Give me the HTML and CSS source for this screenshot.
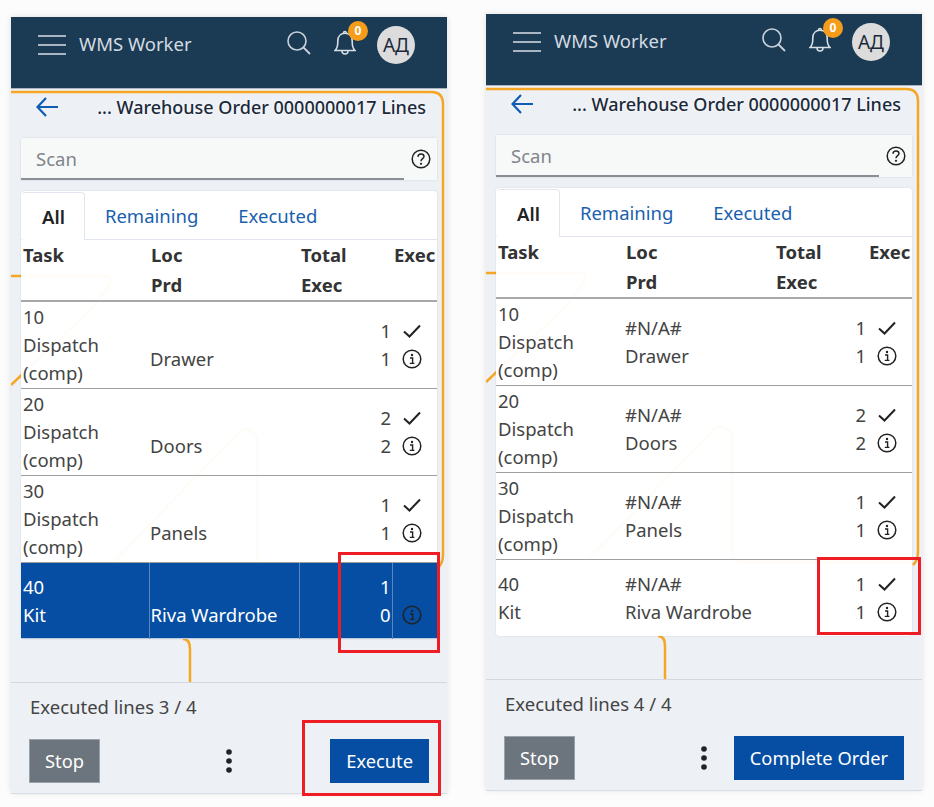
FILE: index.html
```html
<!doctype html>
<html>
  <head>
    <meta http-equiv="Content-Type" content="text/html; charset=UTF-8" />
    <title>WMS Worker</title>
    <link rel="stylesheet" href="styles.css">
  </head>
  <body>
    <!-- shared icons -->
    <svg class="icon-defs" width="0" height="0">
      <symbol id="i-check" viewBox="0 0 20 20">
        <path d="M2 10.5 L7.5 15.5 L18 4.5" fill="none" stroke="currentColor" stroke-width="2"/>
      </symbol>
      <symbol id="i-info" viewBox="0 0 20 20">
        <circle cx="10" cy="10" r="8.8" fill="none" stroke="currentColor" stroke-width="1.5"/>
        <circle cx="10" cy="6" r="1.2" fill="currentColor"/>
        <path d="M8 9 H10.6 V14.2 M7.8 14.4 H12.4" fill="none" stroke="currentColor" stroke-width="1.4"/>
      </symbol>
      <symbol id="i-help" viewBox="0 0 20 20">
        <circle cx="10" cy="10" r="8.8" fill="none" stroke="currentColor" stroke-width="1.5"/>
        <path d="M7 7.8 C7 5.8 8.4 5 10 5 C11.7 5 13 6 13 7.6 C13 9.6 10 9.8 10 12.2" fill="none" stroke="currentColor" stroke-width="1.5"/>
        <circle cx="10" cy="14.8" r="1.1" fill="currentColor"/>
      </symbol>
      <symbol id="i-menu" viewBox="0 0 28 20">
        <path d="M0 1 H28 M0 10 H28 M0 19 H28" stroke="currentColor" stroke-width="2"/>
      </symbol>
      <symbol id="i-search" viewBox="0 0 24 24">
        <circle cx="10" cy="10" r="9" fill="none" stroke="currentColor" stroke-width="1.6"/>
        <path d="M16.5 16.5 L23 23" stroke="currentColor" stroke-width="1.8"/>
      </symbol>
      <symbol id="i-bell" viewBox="0 0 22 26">
        <path d="M1 20.5 C4 18 3.8 15 3.8 11 C3.8 6 7 3.2 11 3.2 C15 3.2 18.2 6 18.2 11 C18.2 15 18 18 21 20.5 Z" fill="none" stroke="currentColor" stroke-width="1.6"/>
        <path d="M9.5 3 A1.5 1.5 0 0 1 12.5 3 M8 21 A3 3 0 0 0 14 21" fill="none" stroke="currentColor" stroke-width="1.5"/>
      </symbol>
      <symbol id="i-back" viewBox="0 0 22 20">
        <path d="M10 1 L1.5 10 L10 19 M1.5 10 H22" fill="none" stroke="currentColor" stroke-width="2.2"/>
      </symbol>
      <symbol id="i-more" viewBox="0 0 6 24">
        <circle cx="3" cy="3" r="2.8" fill="currentColor"/>
        <circle cx="3" cy="12" r="2.8" fill="currentColor"/>
        <circle cx="3" cy="21" r="2.8" fill="currentColor"/>
      </symbol>
      <symbol id="i-decor" viewBox="0 0 436 776">
        <g fill="none" stroke="#f5a623" stroke-width="2.5">
          <path d="M0 75 H420 Q432 75 432 87 V538 Q432 546 427 551"/>
          <path d="M0 259 H92 Q104 259 97 270 L79 293 L0 368"/>
          <path d="M100 548 L225 418 Q236 406 246 420 V538 Q246 548 256 548 H425"/>
          <path d="M172 622 Q179 622 179 632 V665"/>
        </g>
      </symbol>
    </svg>

    <div class="shots">

      <div class="phone phone-left">
        <svg class="decor"><use href="#i-decor"/></svg>
        <div class="appbar">
          <svg class="ic-menu"><use href="#i-menu"/></svg>
          <span class="app-title">WMS Worker</span>
          <svg class="ic-search"><use href="#i-search"/></svg>
          <span class="bell">
            <svg class="ic-bell"><use href="#i-bell"/></svg>
            <span class="badge">0</span>
          </span>
          <span class="avatar">АД</span>
        </div>
        <div class="content">
          <div class="page-head">
            <svg class="ic-back"><use href="#i-back"/></svg>
            <span class="page-title">... Warehouse Order 0000000017 Lines</span>
          </div>
          <div class="scan">
            <div class="scan-input">Scan</div>
            <div class="scan-help"><svg class="ic-round"><use href="#i-help"/></svg></div>
          </div>
          <div class="card">
            <div class="tabs">
              <span class="tab active">All</span>
              <span class="tab">Remaining</span>
              <span class="tab">Executed</span>
            </div>
            <table class="lines">
              <colgroup><col class="c-task"><col class="c-loc"><col class="c-total"><col class="c-exec"></colgroup>
              <thead>
                <tr><th>Task</th><th>Loc<br>Prd</th><th>Total<br>Exec</th><th>Exec</th></tr>
              </thead>
              <tbody>
                <tr>
                  <td>10<br>Dispatch<br>(comp)</td><td>&nbsp;<br>Drawer</td><td class="num">1<br>1</td>
                  <td class="marks"><svg class="ic-check"><use href="#i-check"/></svg><svg class="ic-round"><use href="#i-info"/></svg></td>
                </tr>
                <tr>
                  <td>20<br>Dispatch<br>(comp)</td><td>&nbsp;<br>Doors</td><td class="num">2<br>2</td>
                  <td class="marks"><svg class="ic-check"><use href="#i-check"/></svg><svg class="ic-round"><use href="#i-info"/></svg></td>
                </tr>
                <tr>
                  <td>30<br>Dispatch<br>(comp)</td><td>&nbsp;<br>Panels</td><td class="num">1<br>1</td>
                  <td class="marks"><svg class="ic-check"><use href="#i-check"/></svg><svg class="ic-round"><use href="#i-info"/></svg></td>
                </tr>
                <tr class="selected">
                  <td>40<br>Kit</td><td>&nbsp;<br>Riva Wardrobe</td><td class="num">1<br>0</td>
                  <td class="marks"><svg class="ic-check blank"><use href="#i-check"/></svg><svg class="ic-round"><use href="#i-info"/></svg></td>
                </tr>
              </tbody>
            </table>
          </div>
        </div>
        <div class="footer">
          <div class="progress">Executed lines 3 / 4</div>
          <div class="actions">
            <button class="btn btn-stop">Stop</button>
            <svg class="ic-more"><use href="#i-more"/></svg>
            <button class="btn btn-main">Execute</button>
          </div>
        </div>
        <div class="mark mark-a"></div>
        <div class="mark mark-b"></div>
      </div>

      <div class="phone">
        <svg class="decor"><use href="#i-decor"/></svg>
        <div class="appbar">
          <svg class="ic-menu"><use href="#i-menu"/></svg>
          <span class="app-title">WMS Worker</span>
          <svg class="ic-search"><use href="#i-search"/></svg>
          <span class="bell">
            <svg class="ic-bell"><use href="#i-bell"/></svg>
            <span class="badge">0</span>
          </span>
          <span class="avatar">АД</span>
        </div>
        <div class="content">
          <div class="page-head">
            <svg class="ic-back"><use href="#i-back"/></svg>
            <span class="page-title">... Warehouse Order 0000000017 Lines</span>
          </div>
          <div class="scan">
            <div class="scan-input">Scan</div>
            <div class="scan-help"><svg class="ic-round"><use href="#i-help"/></svg></div>
          </div>
          <div class="card">
            <div class="tabs">
              <span class="tab active">All</span>
              <span class="tab">Remaining</span>
              <span class="tab">Executed</span>
            </div>
            <table class="lines">
              <colgroup><col class="c-task"><col class="c-loc"><col class="c-total"><col class="c-exec"></colgroup>
              <thead>
                <tr><th>Task</th><th>Loc<br>Prd</th><th>Total<br>Exec</th><th>Exec</th></tr>
              </thead>
              <tbody>
                <tr>
                  <td>10<br>Dispatch<br>(comp)</td><td>#N/A#<br>Drawer</td><td class="num">1<br>1</td>
                  <td class="marks"><svg class="ic-check"><use href="#i-check"/></svg><svg class="ic-round"><use href="#i-info"/></svg></td>
                </tr>
                <tr>
                  <td>20<br>Dispatch<br>(comp)</td><td>#N/A#<br>Doors</td><td class="num">2<br>2</td>
                  <td class="marks"><svg class="ic-check"><use href="#i-check"/></svg><svg class="ic-round"><use href="#i-info"/></svg></td>
                </tr>
                <tr>
                  <td>30<br>Dispatch<br>(comp)</td><td>#N/A#<br>Panels</td><td class="num">1<br>1</td>
                  <td class="marks"><svg class="ic-check"><use href="#i-check"/></svg><svg class="ic-round"><use href="#i-info"/></svg></td>
                </tr>
                <tr>
                  <td>40<br>Kit</td><td>#N/A#<br>Riva Wardrobe</td><td class="num">1<br>1</td>
                  <td class="marks"><svg class="ic-check"><use href="#i-check"/></svg><svg class="ic-round"><use href="#i-info"/></svg></td>
                </tr>
              </tbody>
            </table>
          </div>
        </div>
        <div class="footer">
          <div class="progress">Executed lines 4 / 4</div>
          <div class="actions">
            <button class="btn btn-stop">Stop</button>
            <svg class="ic-more"><use href="#i-more"/></svg>
            <button class="btn btn-main">Complete Order</button>
          </div>
        </div>
        <div class="mark mark-c"></div>
      </div>

    </div>
  </body>
</html>
```

FILE: styles.css
```css
html, body {
  height: 100%;
}
body {
  margin: 0;
  background-color: #fcfcfc;
  font-family: "Noto Sans", "Open Sans", sans-serif;
  font-size: 18.5px;
  line-height: 28px;
  color: #444;
  overflow: hidden;
}
.icon-defs {
  position: absolute;
}
.shots {
  display: flex;
  gap: 39px;
  padding: 14px 0 0 11px;
}
.phone {
  position: relative;
  display: flex;
  flex-direction: column;
  flex: none;
  box-sizing: border-box;
  width: 436px;
  height: 776px;
  background-color: #edf0f5;
  box-shadow: 0 0 6px rgba(0, 0, 0, 0.12);
}
.phone-left {
  margin-top: 3px;
}
.decor {
  position: absolute;
  left: 0;
  top: 0;
  width: 436px;
  height: 776px;
}

/* top bar */
.appbar {
  position: relative;
  display: flex;
  align-items: flex-start;
  flex: none;
  box-sizing: border-box;
  height: 72px;
  padding: 9px 32px 0 27px;
  background-color: #1b3a54;
  border-bottom: 1px solid #a9b4bf;
  color: #c9d2da;
}
.ic-menu {
  width: 28px;
  height: 20px;
  margin-top: 9px;
  color: #a9b5c0;
}
.app-title {
  margin: 4px 0 0 13px;
  flex: 1;
  color: #d3dbe2;
}
.ic-search {
  width: 24px;
  height: 24px;
  margin: 5px 23px 0 0;
}
.bell {
  position: relative;
  width: 22px;
  height: 26px;
  margin: 4px 21px 0 0;
}
.ic-bell {
  width: 22px;
  height: 26px;
  color: #d8dfe5;
}
.badge {
  position: absolute;
  left: 14px;
  top: -9px;
  width: 20px;
  height: 20px;
  border-radius: 50%;
  background-color: #f59c1a;
  color: #fff;
  font-size: 12px;
  font-weight: 700;
  line-height: 20px;
  text-align: center;
}
.avatar {
  width: 38px;
  height: 38px;
  border-radius: 50%;
  background-color: #dcdcdc;
  color: #1b2a3a;
  font-size: 19px;
  line-height: 38px;
  text-align: center;
}

/* page body */
.content {
  position: relative;
  flex: 1;
  padding: 0 10px;
}
.page-head {
  display: flex;
  align-items: center;
  justify-content: space-between;
  height: 37px;
  padding: 0 11px 1px 15px;
  box-sizing: border-box;
}
.ic-back {
  width: 22px;
  height: 20px;
  color: #0e5db3;
}
.page-title {
  color: #1b2a3a;
  font-size: 18px;
  font-weight: 500;
  text-shadow: 0 0 3px #fff;
}
.scan {
  display: flex;
  height: 42px;
  margin: 12px 0 11px;
  background-color: #f7f9f9;
  box-shadow: 0 0 2px rgba(0, 0, 0, 0.12);
}
.scan-input {
  flex: 1;
  padding: 7px 15px 0;
  border-bottom: 2px solid #8a8f96;
  color: #808589;
}
.scan-help {
  display: flex;
  align-items: center;
  justify-content: center;
  width: 33px;
}
.ic-round {
  display: block;
  width: 20px;
  height: 20px;
  color: #222;
}
.card {
  width: 416px;
  border-radius: 4px;
  background-color: rgba(255, 255, 255, 0.97);
  box-shadow: 0 0 2px rgba(0, 0, 0, 0.12);
}
.tabs {
  display: flex;
  height: 49px;
  padding: 1px 0 0 1px;
  box-sizing: border-box;
  border-bottom: 1px solid #e1e6ee;
}
.tab {
  padding: 10px 20px 0;
  color: #1a5fae;
}
.tab.active {
  padding: 10px 19px 0 20px;
  margin-bottom: -1px;
  background-color: #fff;
  border: 1px solid #e1e6ee;
  border-bottom: none;
  border-left: none;
  border-radius: 4px 4px 0 0;
  color: #222;
  font-weight: 600;
}

/* table */
.lines {
  width: 416px;
  table-layout: fixed;
  border-collapse: collapse;
}
.c-task { width: 128px; }
.c-loc { width: 150px; }
.c-total { width: 93px; }
.c-exec { width: 45px; }
.lines th {
  height: 60px;
  padding: 0 0 0 2px;
  border-bottom: 2px solid #a8a8a8;
  color: #333;
  font-weight: 700;
  line-height: 30px;
  text-align: left;
  vertical-align: top;
  white-space: nowrap;
}
.lines td {
  height: 76px;
  padding: 1px 1px 1px 1px;
  box-sizing: border-box;
  border-bottom: 1px solid #a0a0a0;
  vertical-align: middle;
}
.lines td:first-child {
  padding-left: 2px;
}
.lines tbody tr:last-child td {
  border-bottom: none;
}
.lines td.num {
  padding-right: 1px;
  text-align: right;
}
.lines td.marks {
  padding: 0;
}
.marks svg {
  display: block;
  margin: 0 auto;
  transform: translateX(-3px);
}
.ic-check {
  width: 20px;
  height: 20px;
  margin-bottom: 8px !important;
  color: #222;
}
.ic-check.blank {
  visibility: hidden;
}
.selected td {
  background-color: #054ea3;
  color: #fff;
  border-left: 1px solid #5d86bd;
  box-shadow: inset 0 -1px 0 #b9c9de;
}
.selected td:first-child {
  border-left: none;
}

/* bottom bar */
.footer {
  position: relative;
  flex: none;
  box-sizing: border-box;
  height: 111px;
  padding: 10px 18px 0 18px;
  border-top: 1px solid #d4d8de;
  background-color: #edf0f5;
  box-shadow: 0 1px 0 #d9dce2;
}
.progress {
  padding-left: 1px;
}
.actions {
  display: grid;
  grid-template-columns: 1fr auto 1fr;
  align-items: center;
  margin-top: 18px;
}
.btn {
  height: 44px;
  padding: 0 15px 2px;
  border: 1px solid;
  font-family: inherit;
  font-size: 18.3px;
  color: #fff;
}
.btn-stop {
  justify-self: start;
  width: 71px;
  padding: 0 0 2px;
  background-color: #6c757d;
  border-color: #9aa1a8;
}
.btn-main {
  justify-self: end;
  background-color: #054ea3;
  border-color: #054ea3;
}
.ic-more {
  width: 6px;
  height: 24px;
  color: #222;
}

/* red call-outs drawn over the screenshots */
.mark {
  position: absolute;
  box-sizing: border-box;
  border: 3px solid #ee1c25;
}
.mark-a { left: 327px; top: 535px; width: 102px; height: 101px; }
.mark-b { left: 291px; top: 703px; width: 139px; height: 76px; }
.mark-c { left: 331px; top: 543px; width: 104px; height: 78px; }
```
